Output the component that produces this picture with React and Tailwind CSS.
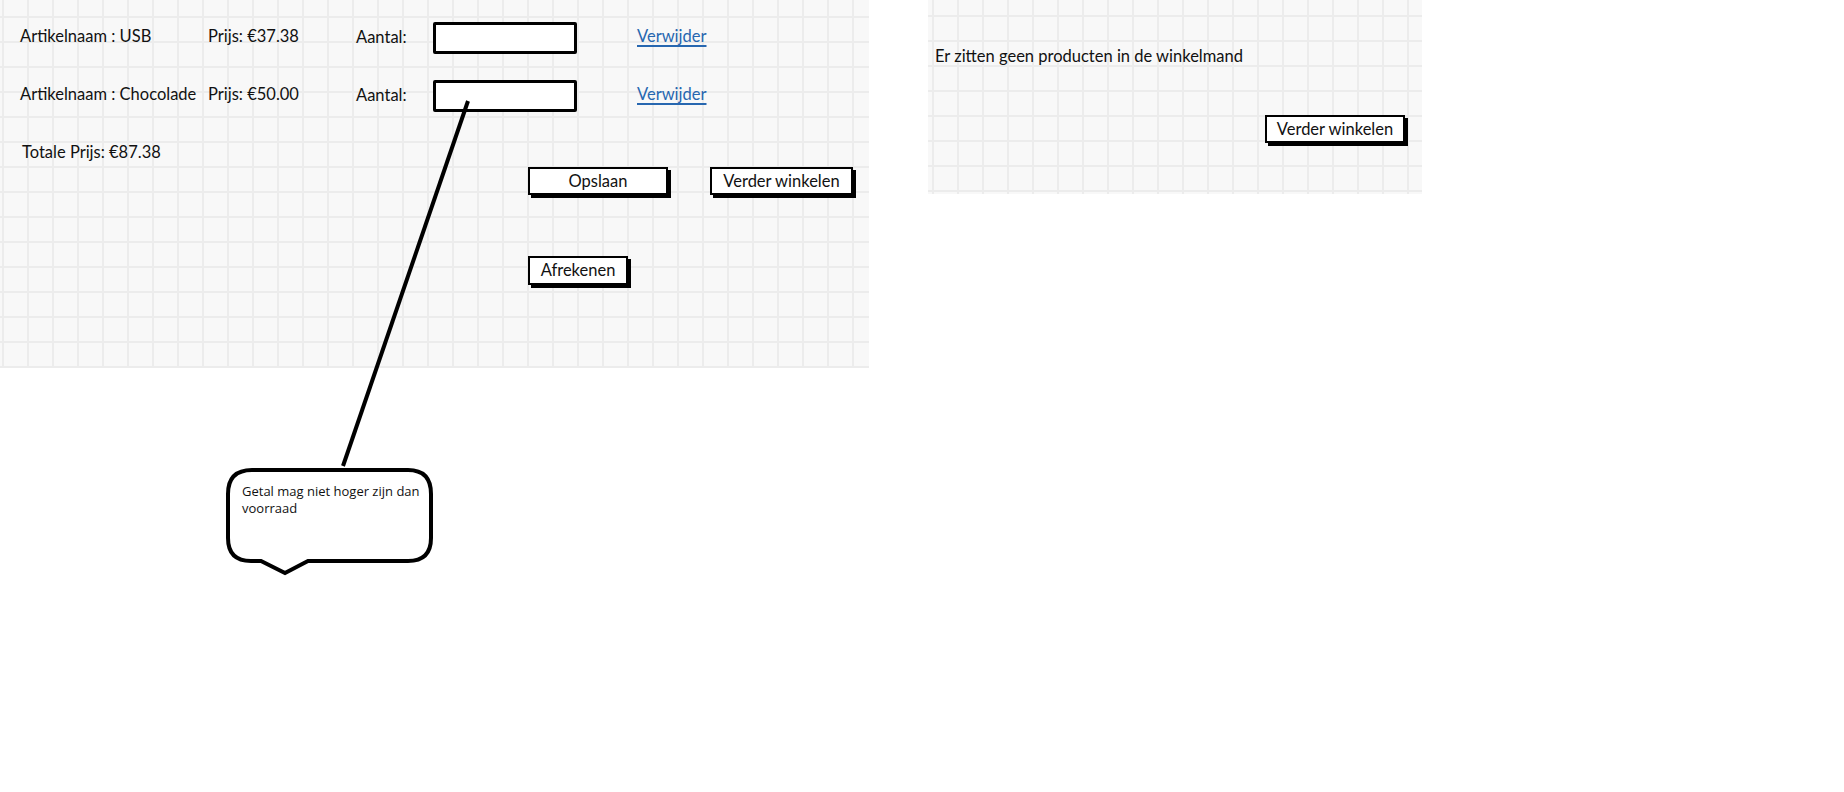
export default function App() {
  return (
    <div className="relative w-[1844px] h-[792px] bg-white overflow-hidden font-[Lato,'Noto_Sans',sans-serif] text-[#111] text-[16.5px]">
      <div className="flex items-start">
        {/* Filled cart */}
        <div className="w-[869px] h-[368px] bg-[#f8f8f8] bg-[linear-gradient(to_right,#ececec_2px,transparent_2px),linear-gradient(to_bottom,#ececec_2px,transparent_2px)] bg-[size:25px_25px] bg-[position:2px_16px] pt-[22px] pl-[20px]">
          {[
            { name: 'USB', price: '€37.38' },
            { name: 'Chocolade', price: '€50.00' },
          ].map((item, i) => (
            <div key={item.name} className={`flex items-center h-[32px] ${i > 0 ? 'mt-[26px]' : ''}`}>
              <span className="w-[188px] pb-[3px] whitespace-nowrap">Artikelnaam : {item.name}</span>
              <span className="w-[148px] pb-[3px] whitespace-nowrap">Prijs: {item.price}</span>
              <span className="w-[77px] pb-[1px]">Aantal:</span>
              <input
                type="text"
                className="w-[144px] h-[32px] bg-white border-[3px] border-black rounded-[2px] outline-none"
              />
              <a href="#" className="ml-[60px] mb-[3px] text-[#2767b0] underline underline-offset-[3px] decoration-[1.5px]">
                Verwijder
              </a>
            </div>
          ))}

          <div className="mt-[31px] h-[20px] flex items-center pl-[2px] pb-[1px]">Totale Prijs: €87.38</div>

          <div className="mt-[4px] ml-[508px] flex gap-[42px]">
            <button className="w-[140px] h-[28px] pb-[2px] bg-white border-2 border-black shadow-[3px_3px_0_#000]">Opslaan</button>
            <button className="w-[143px] h-[28px] pb-[2px] bg-white border-2 border-black shadow-[3px_3px_0_#000]">
              Verder winkelen
            </button>
          </div>

          <div className="mt-[61px] ml-[508px]">
            <button className="w-[100px] h-[29px] pb-[2px] bg-white border-2 border-black shadow-[3px_3px_0_#000]">Afrekenen</button>
          </div>
        </div>

        {/* Empty cart */}
        <div className="ml-[59px] w-[494px] h-[194px] bg-[#f8f8f8] bg-[linear-gradient(to_right,#ececec_2px,transparent_2px),linear-gradient(to_bottom,#ececec_2px,transparent_2px)] bg-[size:25px_25px] bg-[position:4px_15px] pt-[46px] pl-[7px]">
          <div className="h-[20px] flex items-center">Er zitten geen producten in de winkelmand</div>
          <div className="mt-[49px] ml-[330px]">
            <button className="w-[140px] h-[28px] pb-[2px] bg-white border-2 border-black shadow-[3px_3px_0_#000]">
              Verder winkelen
            </button>
          </div>
        </div>
      </div>

      {/* Annotation */}
      <svg className="absolute inset-0 pointer-events-none" width="1844" height="792">
        <line x1="468" y1="101" x2="343" y2="466" stroke="#000" strokeWidth="4" />
        <path
          d="M252 470 H408 Q431 470 431 494 V538 Q431 561 408 561 H308 L285 573 L261 561 H251 Q228 561 228 538 V494 Q228 470 252 470 Z"
          fill="#fff"
          stroke="#000"
          strokeWidth="4"
        />
      </svg>
      <div className="absolute left-[242px] top-[483px] w-[190px] text-[13px] leading-[17px] font-['Open_Sans',sans-serif] text-[#111]">
        Getal mag niet hoger zijn dan voorraad
      </div>
    </div>
  );
}
